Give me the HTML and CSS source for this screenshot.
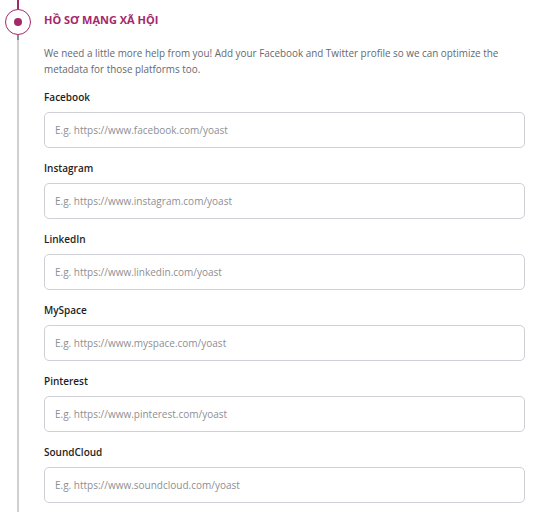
FILE: index.html
```html
<!DOCTYPE html>
<html lang="vi">
<head>
<meta charset="utf-8">
<link rel="stylesheet" href="styles.css">
</head>
<body>
<div class="step">
  <div class="rail">
    <div class="rail-top"></div>
    <div class="rail-dot"><span class="rail-dot-inner"></span></div>
    <div class="rail-joint"></div>
    <div class="rail-bottom"></div>
  </div>
  <div class="content">
    <h2 class="title">HỒ SƠ MẠNG XÃ HỘI</h2>
    <p class="desc">We need a little more help from you! Add your Facebook and Twitter profile so we can optimize the metadata for those platforms too.</p>
    <div class="field">
      <label class="label">Facebook</label>
      <input class="input" type="text" placeholder="E.g. https://www.facebook.com/yoast">
    </div>
    <div class="field">
      <label class="label">Instagram</label>
      <input class="input" type="text" placeholder="E.g. https://www.instagram.com/yoast">
    </div>
    <div class="field">
      <label class="label">LinkedIn</label>
      <input class="input" type="text" placeholder="E.g. https://www.linkedin.com/yoast">
    </div>
    <div class="field">
      <label class="label">MySpace</label>
      <input class="input" type="text" placeholder="E.g. https://www.myspace.com/yoast">
    </div>
    <div class="field">
      <label class="label">Pinterest</label>
      <input class="input" type="text" placeholder="E.g. https://www.pinterest.com/yoast">
    </div>
    <div class="field">
      <label class="label">SoundCloud</label>
      <input class="input" type="text" placeholder="E.g. https://www.soundcloud.com/yoast">
    </div>
  </div>
</div>
</body>
</html>
```
FILE: styles.css
```css
html, body {
  margin: 0;
  padding: 0;
  background: #fff;
  font-family: "Open Sans", "Noto Sans", sans-serif;
  color: #1e1e1e;
}
.step {
  display: flex;
  min-height: 512px;
}
.rail {
  width: 36px;
  flex: none;
  display: flex;
  flex-direction: column;
  align-items: center;
}
.rail-top {
  width: 2px;
  height: 9px;
  background: #a4286a;
}
.rail-dot {
  width: 26px;
  height: 26px;
  box-sizing: border-box;
  border: 1.5px solid #a4286a;
  border-radius: 50%;
  display: flex;
  align-items: center;
  justify-content: center;
}
.rail-dot-inner {
  width: 8px;
  height: 8px;
  border-radius: 50%;
  background: #a4286a;
}
.rail-joint {
  width: 2px;
  height: 5px;
  background: #8c8f94;
}
.rail-bottom {
  width: 2px;
  flex: 1;
  background: #cfd0d4;
}
.content {
  flex: 1;
  padding: 12px 11px 0 8px;
}
.title {
  margin: 0;
  font-size: 11px;
  line-height: 16px;
  font-weight: 700;
  color: #a4286a;
}
.desc {
  margin: 17px 0 0;
  font-size: 9.9px;
  line-height: 16px;
  color: #646970;
}
.field {
  display: flex;
  flex-direction: column;
  margin-top: 12px;
}
.label {
  font-size: 10px;
  line-height: 16px;
  font-weight: 600;
  color: #1e1e1e;
  margin-bottom: 7px;
}
.input {
  height: 36px;
  box-sizing: border-box;
  border: 1px solid #cfd0d6;
  border-radius: 5px;
  padding: 0 10px;
  font-family: inherit;
  font-size: 10px;
  color: #1e1e1e;
  background: #fff;
  outline: none;
}
.input::placeholder {
  color: #8c8f94;
}
```
